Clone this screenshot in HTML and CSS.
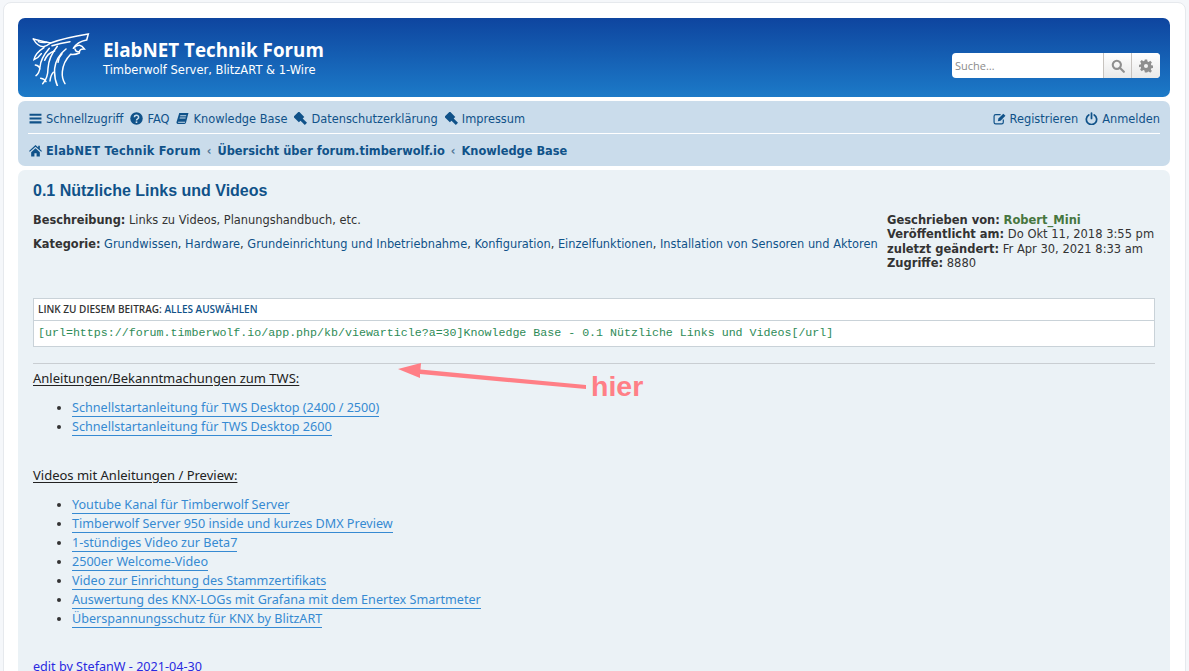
FILE: index.html
```html
<!DOCTYPE html>
<html lang="de">
<head>
  <meta charset="UTF-8" />
  <title>ElabNET Technik Forum - 0.1 Nützliche Links und Videos</title>
  <link rel="stylesheet" href="styles.css">
</head>
<body>
<div class="wrap">

  <div class="headerbar">
    <svg class="logo" viewBox="36 24 180 159" fill="none" stroke="#fff" stroke-width="4.500" stroke-linecap="round">
      <path d="M40 42Q70 50 92 54Q135 38 205 27L200 45Q172 50 160 70"/>
      <path d="M40 42Q52 64 70 65Q82 62 92 54M55 50Q66 54 80 52"/>
      <path d="M96 62Q120 54 150 50"/>
      <path d="M162 68Q180 52 193 72Q178 70 178 84Q165 90 152 88Q130 110 127 140Q125 160 135 176"/>
      <path d="M165 72Q168 82 176 80"/>
      <path d="M72 68Q46 84 42 104Q56 98 64 86M88 70Q62 100 60 126Q58 145 48 152M46 120Q58 122 60 132"/>
      <path d="M112 64Q86 96 84 130Q84 160 68 176M62 160Q74 162 78 170M100 142Q92 150 90 168"/>
      <path d="M138 72Q108 96 104 130Q102 160 112 182"/>
      <path d="M104 78Q82 84 74 106M126 86Q116 96 114 112"/>
    </svg>
    <div class="site-desc">
      <h1>ElabNET Technik Forum</h1>
      <p>Timberwolf Server, BlitzART &amp; 1-Wire</p>
    </div>
    <div class="search-box">
      <span class="search-input">Suche…</span>
      <span class="search-btn">
        <svg viewBox="0 0 24 24" fill="none" stroke="#8f8f8f" stroke-width="3.6"><circle cx="10" cy="10" r="7"/><path d="M15 15l7 7" stroke-linecap="round"/></svg>
      </span>
      <span class="search-btn last">
        <svg viewBox="0 0 24 24" fill="#8f8f8f"><path fill-rule="evenodd" d="M10 1h4l.6 3.2 2 .8 2.700-1.800 2.800 2.800-1.800 2.700.8 2 3.200.6v4l-3.200.6-.8 2 1.800 2.700-2.800 2.800-2.700-1.800-2 .8L14 23h-4l-.6-3.200-2-.8-2.700 1.800-2.800-2.800 1.800-2.700-.8-2L-.3 14v-4l3.200-.6.8-2-1.800-2.700 2.800-2.800 2.700 1.800 2-.8zM12 8.500a3.500 3.500 0 1 0 0 7 3.500 3.500 0 0 0 0-7z"/></svg>
      </span>
    </div>
  </div>

  <div class="navbar">
    <div class="nav-row">
      <a class="nav-item"><svg class="icon" viewBox="0 0 24 24" fill="currentColor"><path d="M1 3h22v4H1zM1 10h22v4H1zM1 17h22v4H1z"/></svg>Schnellzugriff</a>
      <a class="nav-item"><svg class="icon" viewBox="0 0 24 24"><circle cx="12" cy="12" r="11.500" fill="currentColor"/><path d="M8 9.500a4 3.600 0 1 1 6 3.100c-1.300.8-2 1.300-2 2.900" fill="none" stroke="#cadceb" stroke-width="2.800"/><path d="M10.500 17.300h3v3h-3z" fill="#cadceb"/></svg>FAQ</a>
      <a class="nav-item"><svg class="icon" viewBox="0 0 24 24" fill="currentColor"><path fill-rule="evenodd" d="M6 2h17l-4.500 17.500c-.4 1.500-1.300 2.500-3 2.500H3.500C1.500 22 .5 20.500 1 18.500zM8 6l-.5 2h11l.5-2zM7 10l-.5 2h11l.5-2zM4 18c-.5 1.500 0 2 1.200 2h11.300l.5-2z"/></svg>Knowledge Base</a>
      <a class="nav-item"><svg class="icon" viewBox="0 0 24 24" fill="currentColor"><path d="M9-1l10 10-3 3 8 8-4 4-8-8-3 3L-1 9z"/></svg>Datenschutzerklärung</a>
      <a class="nav-item"><svg class="icon" viewBox="0 0 24 24" fill="currentColor"><path d="M9-1l10 10-3 3 8 8-4 4-8-8-3 3L-1 9z"/></svg>Impressum</a>
      <a class="nav-item push"><svg class="icon" viewBox="0 0 24 24" fill="none" stroke="currentColor" stroke-width="2.200"><path d="M19 14v5a3 3 0 0 1-3 3H5a3 3 0 0 1-3-3V8a3 3 0 0 1 3-3h9"/><path d="M10 12l-1 5 5-1L23 7l-4-4z" fill="currentColor" stroke="none"/></svg>Registrieren</a>
      <a class="nav-item"><svg class="icon" viewBox="0 0 24 24" fill="none" stroke="currentColor" stroke-width="3.200" stroke-linecap="round"><path d="M12 2v10M7 5.500a9.500 9.500 0 1 0 10 0"/></svg>Anmelden</a>
    </div>
    <div class="crumbs">
      <svg class="icon home" viewBox="0 0 24 24" fill="currentColor"><path d="M12 2l5 4.500V3h3v6.200l4 3.600-1.500 1.700L12 5 1.500 14.500 0 12.800zM4 15l8-7 8 7v8h-6v-6h-4v6H4z"/></svg>
      <a class="crumb-home">ElabNET Technik Forum</a>
      <span class="crumb-sep">‹</span>
      <a>Übersicht über forum.timberwolf.io</a>
      <span class="crumb-sep">‹</span>
      <a>Knowledge Base</a>
    </div>
  </div>

  <div class="panel">
    <h2>0.1 Nützliche Links und Videos</h2>
    <div class="article-info">
      <div class="info-left">
        <p><b>Beschreibung:</b> Links zu Videos, Planungshandbuch, etc.</p>
        <p><b>Kategorie:</b> <a>Grundwissen</a>, <a>Hardware</a>, <a>Grundeinrichtung und Inbetriebnahme</a>, <a>Konfiguration</a>, <a>Einzelfunktionen</a>, <a>Installation von Sensoren und Aktoren</a></p>
      </div>
      <div class="info-right">
        <div><b>Geschrieben von:</b> <a class="author">Robert_Mini</a></div>
        <div><b>Veröffentlicht am:</b> Do Okt 11, 2018 3:55 pm</div>
        <div><b>zuletzt geändert:</b> Fr Apr 30, 2021 8:33 am</div>
        <div><b>Zugriffe:</b> 8880</div>
      </div>
    </div>

    <div class="codebox">
      <div class="code-head">Link zu diesem Beitrag: <a>Alles auswählen</a></div>
      <code>[url=https://forum.timberwolf.io/app.php/kb/viewarticle?a=30]Knowledge Base - 0.1 Nützliche Links und Videos[/url]</code>
    </div>

    <hr>

    <div class="post">
      <p class="heading">Anleitungen/Bekanntmachungen zum TWS:</p>
      <ul>
        <li><a>Schnellstartanleitung für TWS Desktop (2400 / 2500)</a></li>
        <li><a>Schnellstartanleitung für TWS Desktop 2600</a></li>
      </ul>
      <p class="heading second">Videos mit Anleitungen / Preview:</p>
      <ul>
        <li><a>Youtube Kanal für Timberwolf Server</a></li>
        <li><a>Timberwolf Server 950 inside und kurzes DMX Preview</a></li>
        <li><a>1-stündiges Video zur Beta7</a></li>
        <li><a>2500er Welcome-Video</a></li>
        <li><a>Video zur Einrichtung des Stammzertifikats</a></li>
        <li><a>Auswertung des KNX-LOGs mit Grafana mit dem Enertex Smartmeter</a></li>
        <li><a>Überspannungsschutz für KNX by BlitzART</a></li>
      </ul>
      <p class="edit-note">edit by StefanW - 2021-04-30</p>
    </div>
  </div>
</div>

<!-- annotation drawn over the screenshot -->
<svg class="arrow" viewBox="0 0 190 32" fill="#ff7f86">
  <path d="M0 9L23 3 22.500 9.500 188 25 188 29 22 14 22 18z"/>
</svg>
<span class="hier">hier</span>

</body>
</html>
```

FILE: styles.css
```css
html, body {
  height: 671px;
  overflow: hidden;
}
body {
  margin: 0;
  padding: 2px 3px 0 3px;
  box-sizing: border-box;
  background-color: #f5f7fa;
  font-family: "DejaVu Sans", Verdana, sans-serif;
  font-size: 11.4px;
  color: #333;
}
a {
  text-decoration: none;
}

.wrap {
  background-color: #fff;
  border: 1px solid #e6e9ed;
  border-radius: 8px;
  padding: 15px 15px 0 14px;
  height: 700px;
}

/* Header */
.headerbar {
  display: flex;
  align-items: flex-start;
  height: 79px;
  box-sizing: border-box;
  padding: 15px 10px 0 14px;
  margin-bottom: 4px;
  border-radius: 7px;
  color: #fff;
  background-color: #12a3eb;
  background-image: linear-gradient(to bottom, #0e459f 0%, #1c7ac8 100%);
}
.logo {
  width: 60px;
  height: 53px;
  flex: none;
}
.site-desc {
  margin-left: 11px;
  padding-top: 6px;
}
.site-desc h1 {
  margin: 0;
  font-family: "Open Sans", sans-serif;
  font-size: 18.800px;
  line-height: 22px;
  font-weight: 700;
}
.site-desc p {
  margin: 2px 0 0 0;
  font-size: 11.500px;
  line-height: 14px;
}
.search-box {
  display: flex;
  margin-left: auto;
  margin-top: 20px;
  height: 25px;
  background: #fff;
  border-radius: 4px;
  overflow: hidden;
}
.search-input {
  width: 148px;
  padding-left: 3px;
  line-height: 25px;
  font-size: 11px;
  color: #8b8b8b;
  font-family: "Open Sans", sans-serif;
}
.search-btn {
  display: flex;
  align-items: center;
  justify-content: center;
  width: 27px;
  border-left: 1px solid #c7c3bf;
  background-image: linear-gradient(to bottom, #fff 0%, #e9e9e9 100%);
}
.search-btn.last {
  width: 28px;
}
.search-btn svg {
  width: 14px;
  height: 14px;
}

/* Nav */
.navbar {
  height: 65px;
  box-sizing: border-box;
  padding: 3px 10px 0 10px;
  margin-bottom: 4px;
  border-radius: 7px;
  background-color: #cadceb;
}
.nav-row {
  display: flex;
  align-items: center;
  gap: 7px;
  height: 29px;
  padding-left: 1px;
  border-bottom: 1px solid #fff;
}
.nav-item {
  display: flex;
  align-items: center;
  color: #105289;
  white-space: nowrap;
}
.nav-item.push {
  margin-left: auto;
}
.icon {
  width: 13px;
  height: 13px;
  margin-right: 4px;
  color: #105289;
  flex: none;
}
.crumbs {
  display: flex;
  align-items: center;
  height: 33px;
  padding-left: 1px;
  font-weight: bold;
  color: #105289;
  white-space: nowrap;
}
.crumb-home {
  letter-spacing: 0.240px;
}
.crumb-sep {
  margin: 0 6px;
  font-weight: bold;
  color: #4f7696;
}

/* Article panel */
.panel {
  height: 520px;
  padding: 11px 15px 0 15px;
  border-radius: 7px;
  background-color: #ebf2f6;
}
.panel h2 {
  margin: 0;
  font-family: "Liberation Sans", Arial, sans-serif;
  font-size: 16px;
  line-height: 20px;
  font-weight: bold;
  color: #105289;
}
.article-info {
  display: flex;
  justify-content: space-between;
  height: 85px;
  margin-top: 12px;
}
.info-left p {
  margin: 0 0 10px 0;
  line-height: 14px;
}
.info-left a {
  color: #105289;
}
.info-right {
  width: 268px;
  font-size: 11.500px;
  line-height: 14.400px;
  white-space: nowrap;
}
.author {
  color: #47763f;
  font-weight: bold;
}

.codebox {
  border: 1px solid #c9d2d8;
  background-color: #fff;
}
.code-head {
  height: 21px;
  line-height: 21px;
  padding-left: 4px;
  font-size: 10px;
  font-family: "Open Sans", sans-serif;
  font-weight: 600;
  text-transform: uppercase;
  border-bottom: 1px solid #c9d2d8;
}
.code-head a {
  color: #105289;
}
.codebox code {
  display: block;
  height: 25px;
  line-height: 24px;
  padding-left: 4px;
  font-family: "Liberation Mono", monospace;
  font-size: 11.640px;
  color: #2e8b57;
  white-space: nowrap;
}
hr {
  height: 1px;
  margin: 16px 0 5px 0;
  border: 0;
  background-color: #c9ced2;
}

/* Post body */
.post {
  font-size: 12.600px;
  line-height: 19px;
  font-family: "Noto Sans", sans-serif;
}
.post p {
  margin: 0;
}
.heading {
  font-size: 13px;
  color: #222;
  text-decoration: underline;
  text-underline-offset: 2px;
}
.heading.second {
  margin-top: 30px !important;
}
.post ul {
  margin: 10px 0 0 0;
  padding: 0 0 0 39px;
}
.post li a {
  color: #368ad2;
  border-bottom: 1px solid #368ad2;
}
.edit-note {
  margin-top: 29px !important;
  color: #2a2ae0;
}

/* Annotation */
.arrow {
  position: absolute;
  left: 398px;
  top: 360px;
  width: 190px;
  height: 32px;
}
.hier {
  position: absolute;
  left: 591px;
  top: 370px;
  font-family: "Liberation Sans", Arial, sans-serif;
  font-size: 28.500px;
  line-height: 32px;
  font-weight: bold;
  color: #ff7f86;
}
```
